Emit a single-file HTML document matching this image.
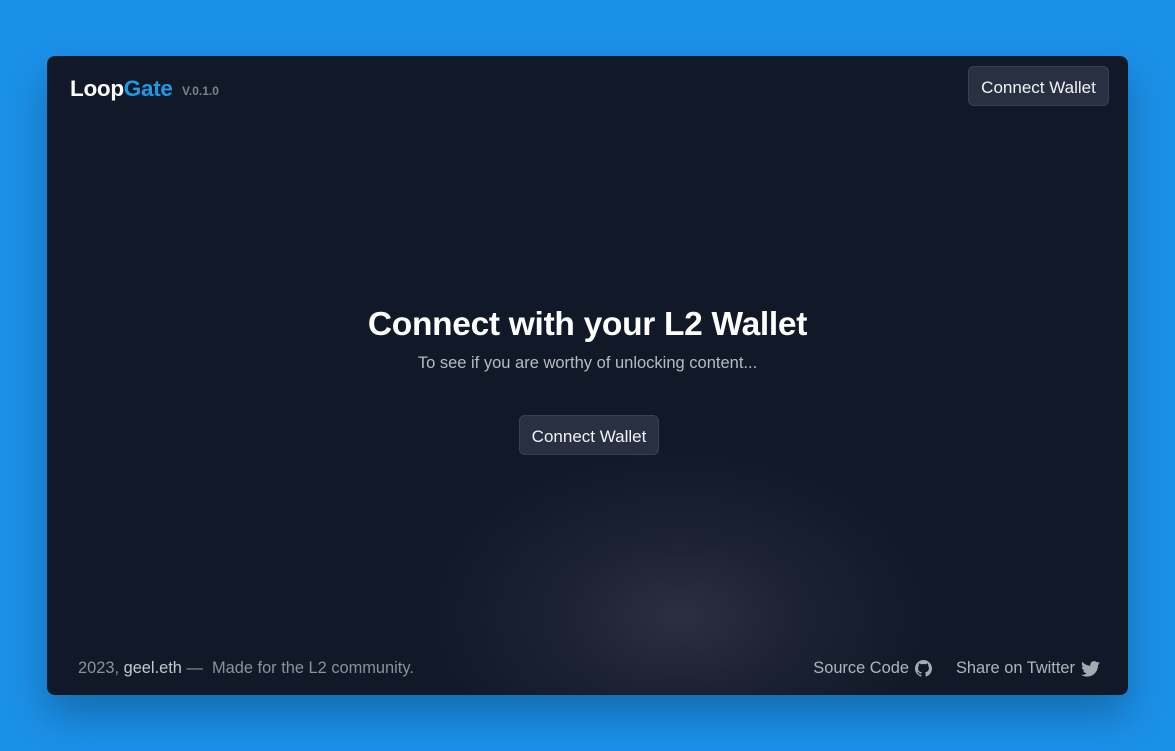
<!DOCTYPE html>
<html><head><meta charset="utf-8"><style>
*{margin:0;padding:0;box-sizing:border-box}
html,body{width:1175px;height:751px;overflow:hidden;background:#1b90e8;font-family:"Liberation Sans",sans-serif}
.card{position:absolute;left:47px;top:56px;width:1081px;height:639px;border-radius:8px;overflow:hidden;
background:radial-gradient(ellipse 260px 170px at 633px 560px,#2a3042 0%,#1c2233 45%,rgba(17,24,39,0) 100%),#111827;
box-shadow:0 20px 40px rgba(0,0,0,.25)}
.logo{position:absolute;left:23px;top:20px;font-size:22.5px;font-weight:bold;color:#fff;letter-spacing:-0.3px}
.logo span{color:#1e9be6}
.ver{position:absolute;left:135px;top:28px;font-size:12px;font-weight:bold;color:#7d828c}
.btn{position:absolute;background:#293042;border:1px solid #384055;border-radius:6px;color:#f2f3f5;font-size:17px;text-align:center}
.btn.top{left:921px;top:10px;width:141px;height:40px;line-height:41px}
.btn.mid{left:472px;top:359px;width:140px;height:40px;line-height:41px}
h1{position:absolute;left:0;width:1081px;top:250px;text-align:center;color:#fff;font-size:33.5px;font-weight:bold;letter-spacing:-0.3px}
.sub{position:absolute;left:0;width:1081px;top:298px;text-align:center;color:#b7bbc3;font-size:16.5px}
.foot{position:absolute;top:603px;font-size:16.4px;color:#8c919b}
.foot b{color:#c6c9cf;font-weight:normal}
.fr{color:#b0b4bc;display:flex;align-items:center;gap:6px;right:28px}
svg{fill:#a6aab2}
</style></head><body>
<div class="card">
<div class="logo">Loop<span>Gate</span></div>
<div class="ver">V.0.1.0</div>
<div class="btn top">Connect Wallet</div>
<h1>Connect with your L2 Wallet</h1>
<div class="sub">To see if you are worthy of unlocking content...</div>
<div class="btn mid">Connect Wallet</div>
<div class="foot" style="left:31px"><span>2023, </span><b>geel.eth</b><span> —&nbsp; Made for the L2 community.</span></div>
<div class="foot fr">Source Code <svg width="17" height="17" viewBox="0 0 16 16"><path d="M8 0C3.6 0 0 3.6 0 8c0 3.5 2.3 6.5 5.5 7.6.4.1.5-.2.5-.4v-1.4c-2.2.5-2.7-1-2.7-1-.4-.9-.9-1.200-.9-1.2-.7-.5.1-.5.1-.5.8.1 1.2.8 1.2.8.7 1.2 1.9.9 2.3.7.1-.5.3-.9.5-1.1-1.8-.2-3.6-.9-3.6-4 0-.9.3-1.6.8-2.1-.1-.2-.4-1 .1-2.1 0 0 .7-.2 2.2.8.6-.2 1.3-.3 2-.3s1.4.1 2 .3c1.5-1 2.2-.8 2.2-.8.4 1.1.2 1.9.1 2.1.5.6.8 1.3.8 2.1 0 3.1-1.9 3.7-3.6 3.9.3.3.5.8.5 1.5v2.2c0 .2.1.5.6.4C13.7 14.5 16 11.5 16 8c0-4.4-3.6-8-8-8z"/></svg><span style="width:12px"></span>Share on Twitter <svg width="19" height="16" viewBox="0 0 24 20"><path d="M24 2.4c-.9.4-1.8.7-2.8.8 1-.6 1.8-1.6 2.2-2.7-1 .6-2 1-3.1 1.2C19.3.7 18 0 16.6 0c-2.7 0-4.9 2.2-4.900 4.9 0 .4 0 .8.1 1.1C7.7 5.8 4.1 3.9 1.7.9c-.4.7-.7 1.6-.7 2.5 0 1.7.9 3.2 2.2 4.1-.8 0-1.6-.2-2.2-.6v.1c0 2.4 1.7 4.4 3.9 4.8-.4.1-.8.2-1.3.2-.3 0-.6 0-.9-.1.6 2 2.4 3.4 4.6 3.4-1.7 1.3-3.8 2.1-6.1 2.1-.4 0-.8 0-1.2-.1C2.2 18.8 4.8 19.6 7.5 19.6c9.100 0 14-7.5 14-14v-.6c1-.7 1.8-1.6 2.5-2.6z"/></svg></div>
</div>
</body></html>
